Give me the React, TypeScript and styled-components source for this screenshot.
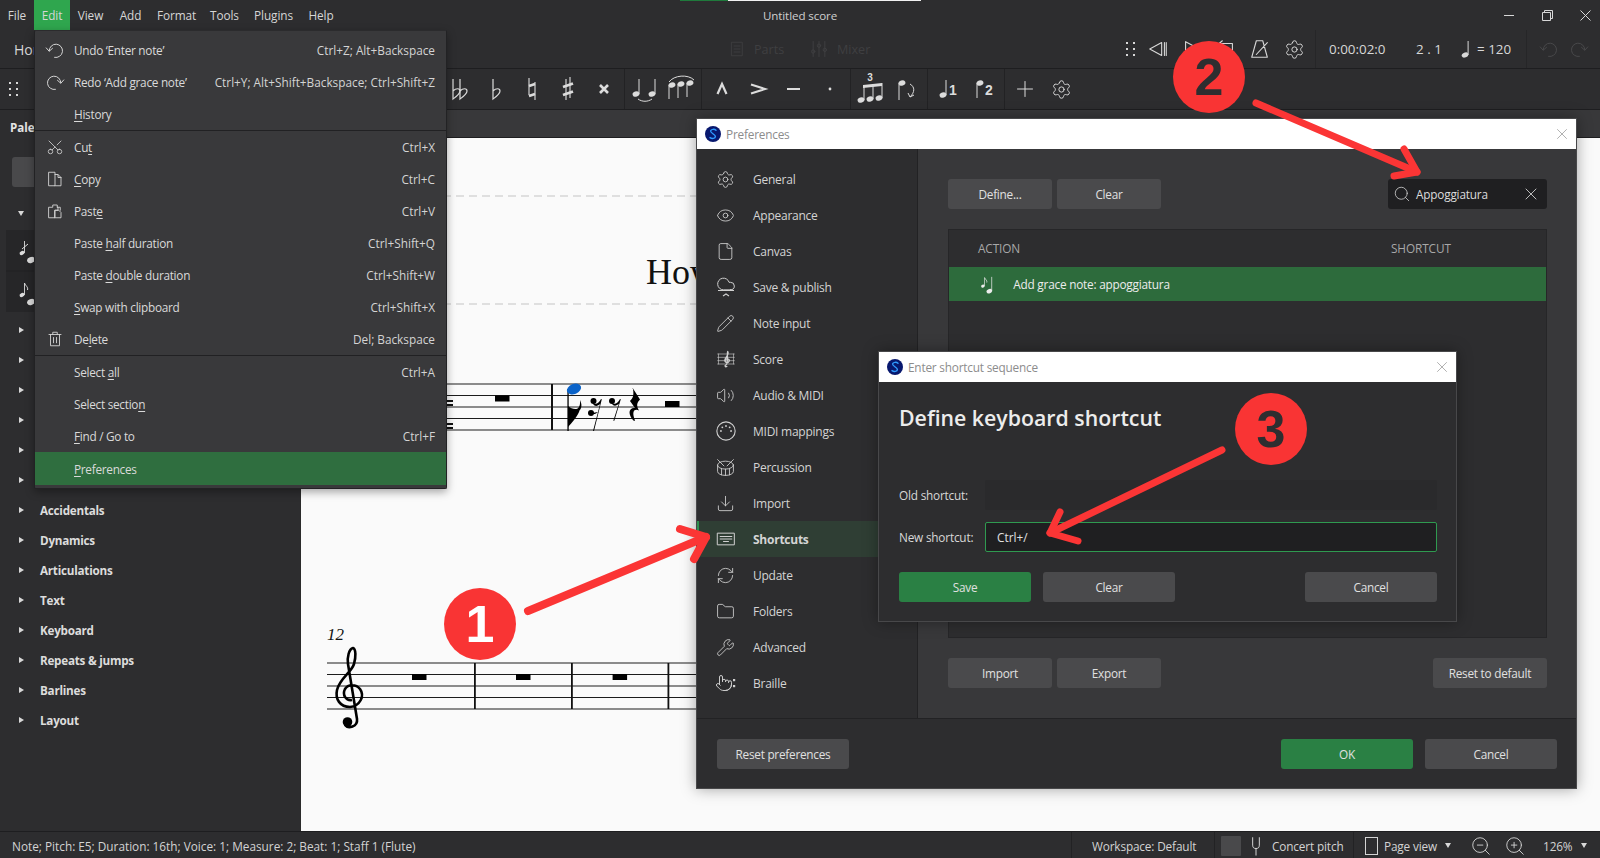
import React from "react";
import styled, { createGlobalStyle } from "styled-components";
import { Settings, Eye, File, Cloud, Pencil, Volume2, Drum, Download, RefreshCw, Folder, Wrench, Pointer, Scissors, Search, X, ZoomIn, ZoomOut } from "lucide-react";

const Global = createGlobalStyle`
  html, body { margin: 0; padding: 0; background: #2d2d2f; }
  body { font-family: "Open Sans", "Noto Sans", "Liberation Sans", sans-serif; font-size: 11.6px; color: #d8d8d8; overflow: hidden; }
  * { box-sizing: border-box; }
  #root { width: 1600px; height: 858px; }
`;

const Page = styled.div`
  position: relative; width: 1600px; height: 858px; display: flex; flex-direction: column; background: #2d2d2f; overflow: hidden;
`;

/* ---------- top bars ---------- */
const TitleBar = styled.div`
  height: 30px; display: grid; grid-template-columns: 1fr auto 1fr; align-items: stretch; flex: none;
`;
const MenuItems = styled.div` display: flex; `;
const MenuItem = styled.div<{ $w: number; $active?: boolean }>`
  width: ${(p) => p.$w}px; display: flex; align-items: center; justify-content: center; color: #d6d6d6; font-size: 11.8px; letter-spacing: -0.1px;
  background: ${(p) => (p.$active ? "#2fa64e" : "transparent")};
`;
const WindowTitle = styled.div` display: flex; align-items: center; font-size: 11.6px; letter-spacing: -0.1px; color: #cfcfcf; `;
const WindowControls = styled.div` display: flex; justify-content: flex-end; gap: 8px; `;
const WindowButton = styled.div` width: 30px; display: flex; align-items: center; justify-content: center; color: #d8d8d8; `;
const Progress = styled.div`
  position: absolute; left: 680px; top: 0; width: 241px; height: 1px; background: linear-gradient(90deg, #1f7a3c 0 48px, #f2f2f2 48px);
`;

const HomeBar = styled.div`
  height: 39px; flex: none; display: flex; align-items: center; border-bottom: 1px solid #1e1e20;
`;
const HomeTab = styled.div` width: 728px; padding-left: 14px; font-size: 14px; color: #d8d8d8; `;
const FaintItem = styled.div<{ $w: number }>`
  width: ${(p) => p.$w}px; display: flex; align-items: center; gap: 8px; color: #3f3f41; font-size: 12.6px;
`;
const Transport = styled.div` margin-left: auto; display: flex; align-items: center; height: 100%; `;
const TButton = styled.div<{ $w?: number; $faint?: boolean }>`
  width: ${(p) => p.$w ?? 34}px; height: 100%; display: flex; align-items: center; justify-content: center; color: ${(p) => (p.$faint ? "#48484a" : "#d8d8d8")};
`;
const TDivider = styled.div` width: 1px; height: 100%; background: #262628; margin-left: 4px; `;
const Counter = styled.div<{ $w: number; $ml: number }>`
  width: ${(p) => p.$w}px; margin-left: ${(p) => p.$ml}px; font-size: 13.4px; color: #d8d8d8; display: flex; align-items: center; gap: 5px; white-space: nowrap;
`;
const EndDivider = styled.div` width: 1px; height: 100%; background: #262628; margin-left: 11px; margin-right: 7px; `;

const NoteBar = styled.div`
  height: 41px; flex: none; display: flex; align-items: stretch; border-bottom: 1px solid #1e1e20;
`;
const GripCell = styled.div` width: 28px; display: flex; align-items: center; justify-content: center; color: #d8d8d8; margin-right: 412px; `;
const NoteGroup = styled.div<{ $last?: boolean }>`
  display: flex; padding: 0 2px; align-items: center; border-right: ${(p) => (p.$last ? "none" : "1px solid #222224")};
`;
const NoteButton = styled.div` width: 36px; height: 100%; display: flex; align-items: center; justify-content: center; color: #dcdcdc; `;

/* ---------- body ---------- */
const Body = styled.div` flex: 1; display: flex; min-height: 0; `;
const Palette = styled.div` width: 300px; flex: none; display: flex; flex-direction: column; background: #2d2d2f; `;
const PaletteTab = styled.div` height: 27px; padding: 10px 0 0 10px; font-weight: 700; font-size: 11.6px; color: #e4e4e4; line-height: 16px; `;
const PaletteSearch = styled.div` margin: 20px 14px 11px 12px; height: 30px; background: #49494b; border-radius: 3px; flex: none; `;
const PaletteRow = styled.div`
  height: 30px; flex: none; display: flex; align-items: center; gap: 16px; padding-left: 19px; font-weight: 700; font-size: 11.7px; letter-spacing: -0.25px; color: #dcdcdc;
`;
const Caret = styled.span<{ $open?: boolean }>`
  display: inline-block; width: 0; height: 0; flex: none;
  ${(p) =>
    p.$open
      ? "border-left: 3px solid transparent; border-right: 3px solid transparent; border-top: 5px solid #d8d8d8; margin-left: -1px; margin-right: -1px;"
      : "border-top: 3px solid transparent; border-bottom: 3px solid transparent; border-left: 5px solid #d8d8d8;"}
`;
const PaletteCells = styled.div` margin: 2px 10px 3px 6px; height: 82px; background: #232325; display: flex; flex-direction: column; gap: 2px; flex: none; `;
const PaletteCell = styled.div` flex: 1; padding-left: 12px; display: flex; align-items: center; color: #dcdcdc; background: #262628; `;

const MainColumn = styled.div` flex: 1; display: flex; flex-direction: column; min-width: 0; `;
const TabStrip = styled.div` height: 28px; flex: none; background: #38383a; border-bottom: 1px solid #1e1e20; `;
const Score = styled.div` position: relative; flex: 1; background: #fafafa; border-left: 1px solid #2b2b2b; overflow: hidden; `;
const ScoreCanvas = styled.svg` position: absolute; left: -1px; top: 0; width: 1300px; height: 694px; `;

/* ---------- status bar ---------- */
const StatusBar = styled.div`
  height: 27px; flex: none; display: flex; align-items: center; border-top: 1px solid #1e1e20; background: #2d2d2f; font-size: 11.8px; letter-spacing: -0.15px; color: #d4d4d4;
`;
const StatusText = styled.div` padding: 1px 0 0 12px; flex: 1; white-space: nowrap; letter-spacing: 0; `;
const StatusSection = styled.div<{ $w: number; $pad?: number; $gap?: number }>`
  width: ${(p) => p.$w}px; height: 100%; display: flex; align-items: center; border-left: 1px solid #222224; padding: 1px 0 0 ${(p) => p.$pad ?? 20}px; gap: ${(p) => p.$gap ?? 8}px; white-space: nowrap;
`;
const ToggleBox = styled.div` width: 20px; height: 20px; background: #49494b; margin-left: -14px; border-radius: 1px; margin-right: -3px; `;
const ConcertLabel = styled.span` margin-left: -2px; `;
const DownCaret = styled.span<{ $ml: number }>`
  display: inline-block; width: 0; height: 0; margin-left: ${(p) => p.$ml}px; border-left: 3px solid transparent; border-right: 3px solid transparent; border-top: 5px solid #d8d8d8;
`;
const ZoomSlot = styled.span<{ $ml: number }>` display: flex; margin-left: ${(p) => p.$ml}px; `;
const ZoomValue = styled.span` margin-left: 11px; `;

/* ---------- edit menu ---------- */
const EditMenu = styled.div`
  position: absolute; left: 34px; top: 30px; width: 413px; background: #39393b; border: 1px solid #222224; border-top-color: #2b2b2d; padding: 3px 0;
  border-radius: 2px; box-shadow: 0 3px 8px rgba(0, 0, 0, 0.35); z-index: 3; font-size: 11.8px; color: #dadada;
`;
const MenuRow = styled.div<{ $hot?: boolean }>`
  height: ${(p) => (p.$hot ? 33 : 32)}px; display: flex; align-items: center; background: ${(p) => (p.$hot ? "#2f6e3f" : "transparent")}; padding-right: 11px; white-space: nowrap;
  u { text-underline-offset: 2px; text-decoration-thickness: 1px; }
`;
const MenuIcon = styled.span` width: 39px; display: flex; justify-content: center; color: #d4d4d4; `;
const MenuLabel = styled.span` flex: 1; letter-spacing: -0.28px; `;
const MenuKeys = styled.span` color: #d4d4d4; `;
const MenuRule = styled.div` height: 1px; background: #212123; `;

/* ---------- dialogs ---------- */
const Dialog = styled.div<{ $x: number; $y: number; $w: number; $h: number; $z: number }>`
  position: absolute; left: ${(p) => p.$x}px; top: ${(p) => p.$y}px; width: ${(p) => p.$w}px; height: ${(p) => p.$h}px; z-index: ${(p) => p.$z};
  display: flex; flex-direction: column; background: #2d2d2f; box-shadow: 0 0 14px rgba(0, 0, 0, 0.35); outline: 1px solid #48484a; outline-offset: -1px;
`;
const DialogTitle = styled.div`
  height: 31px; flex: none; background: #fff; display: flex; align-items: center; padding: 0 6px 0 9px; gap: 5px; color: #8c8c8c; font-size: 11.8px; letter-spacing: -0.2px;
`;
const DialogClose = styled.span` margin-left: auto; color: #8a8a8a; display: flex; `;

const PrefBody = styled.div` flex: 1; display: flex; min-height: 0; `;
const PrefNav = styled.div` width: 222px; flex: none; padding-top: 12px; border-right: 1px solid #222224; `;
const NavRow = styled.div<{ $on?: boolean }>`
  height: 36px; display: flex; align-items: center; color: #d4d4d4; font-size: 12px; letter-spacing: -0.25px;
  font-weight: ${(p) => (p.$on ? 700 : 400)};
  background: ${(p) => (p.$on ? "#2f3e34" : "transparent")};
  border-left: 3px solid ${(p) => (p.$on ? "#2f8f4f" : "transparent")};
`;
const NavIcon = styled.span` width: 53px; display: flex; justify-content: center; color: #d0d0d0; `;
const NavLabel = styled.span` padding-left: 1px; `;
const PrefMain = styled.div` flex: 1; background: #38383a; padding: 30px; display: flex; flex-direction: column; gap: 20px; min-width: 0; `;
const RowBar = styled.div` display: flex; align-items: center; gap: 5px; flex: none; `;
const Push = styled.div` margin-left: auto; `;
const Btn = styled.div<{ $w: number; $primary?: boolean }>`
  width: ${(p) => p.$w}px; height: 30px; border-radius: 3px; display: flex; align-items: center; justify-content: center; flex: none;
  background: ${(p) => (p.$primary ? "#2a8044" : "#4a4a4c")}; color: #e0e0e0; font-size: 11.8px; letter-spacing: -0.25px;
`;
const SearchBox = styled.div`
  width: 159px; height: 30px; background: #1f1f21; border-radius: 3px; display: flex; align-items: center; padding: 0 6px 0 5px; gap: 5px; color: #dcdcdc; font-size: 11.8px; letter-spacing: -0.2px;
`;
const SearchValue = styled.span` flex: 1; `;
const Table = styled.div` flex: 1; background: #2d2d2f; border: 1px solid #262628; display: flex; flex-direction: column; min-height: 0; `;
const TableHead = styled.div` height: 37px; flex: none; display: flex; align-items: center; padding: 0 0 1px 29px; color: #a8a8a8; font-size: 11.8px; letter-spacing: -0.1px; `;
const HeadShortcut = styled.span` margin-left: auto; width: 155px; `;
const TableRow = styled.div` height: 34px; flex: none; display: flex; align-items: center; padding-left: 31px; background: #2d6b3c; color: #ececec; font-size: 11.8px; letter-spacing: -0.22px; gap: 19px; `;
const PrefFooter = styled.div` height: 71px; flex: none; border-top: 1px solid #222224; display: flex; align-items: center; padding: 0 20px 0 21px; gap: 12px; `;

const DefineBody = styled.div` flex: 1; display: flex; flex-direction: column; padding: 20px 20px 20px 21px; min-height: 0; `;
const DefineHeading = styled.div` font-size: 21.3px; font-weight: 600; line-height: 32px; color: #ececec; height: 78px; `;
const FieldRow = styled.div` display: flex; align-items: center; height: 30px; margin-bottom: 12px; font-size: 11.8px; color: #d8d8d8; `;
const FieldLabel = styled.span` width: 86px; flex: none; letter-spacing: -0.2px; `;
const Field = styled.div<{ $focus?: boolean }>`
  flex: 1; height: 30px; border-radius: 2px; display: flex; align-items: center; padding-left: 11px; color: #e0e0e0;
  background: ${(p) => (p.$focus ? "#1f1f21" : "#2a2a2c")}; border: 1px solid ${(p) => (p.$focus ? "#2f9a50" : "transparent")};
`;
const DefineButtons = styled.div` display: flex; gap: 12px; margin-top: 8px; `;

/* ---------- annotations ---------- */
const Overlay = styled.svg` position: absolute; left: 0; top: 0; width: 1600px; height: 858px; z-index: 8; pointer-events: none; `;
const Badge = styled.div<{ $x: number; $y: number; $light?: boolean }>`
  position: absolute; left: ${(p) => p.$x - 36}px; top: ${(p) => p.$y - 36}px; width: 72px; height: 72px; border-radius: 50%; z-index: 9; background: #f93434;
  display: flex; align-items: center; justify-content: center; font-family: "Liberation Sans", Arial, sans-serif; font-weight: 700; font-size: 52px;
  color: ${(p) => (p.$light ? "#ffffff" : "#2e2e30")};
`;

/* ---------- icons ---------- */
const Dots = () => (
  <svg width="12" height="16" viewBox="0 0 12 16" fill="currentColor">
    {[1, 7, 13].map((y) => [1, 8].map((x) => <rect key={`${x}${y}`} x={x} y={y} width="2" height="2" />))}
  </svg>
);
const Logo = () => (
  <svg width="16" height="16" viewBox="0 0 16 16">
    <circle cx="8" cy="8" r="8" fill="#08186e" />
    <path d="M11 4.2C9.5 2.8 6 3 5.6 5c-.4 2 4.8 3.4 4.8 5.6 0 2-3.5 2.4-5.4 1" fill="none" stroke="#2f9bff" strokeWidth="1.4" strokeLinecap="round" />
  </svg>
);
const S = ({ size = 18, children }: { size?: number; children: React.ReactNode }) => (
  <svg width={size} height={size} viewBox="0 0 24 24" fill="none" stroke="currentColor" strokeWidth="1.2" strokeLinecap="round" strokeLinejoin="round">
    {children}
  </svg>
);
const thin = { size: 19, strokeWidth: 1.1 };

const UndoIcon = () => (
  <S size={20}>
    <path d="M5 13a8 8 0 1 1 6.5 7.9" />
    <path d="M1.5 9.5 5 13.5l4-3.5" />
  </S>
);
const RedoIcon = () => (
  <S size={20}>
    <path d="M19 13a8 8 0 1 0-6.5 7.9" />
    <path d="M22.5 9.5 19 13.5l-4-3.5" />
  </S>
);
const CopyIcon = () => (
  <S>
    <path d="M4 3h8v18H4zM12 6h4l4 4v11h-8" />
    <path d="M16 6v4h4" />
  </S>
);
const PasteIcon = () => (
  <S>
    <path d="M4 7h5V4h6v3h1v4h-4v10H4z" />
    <path d="M12 11h5l3 3v7h-8zM15 7h4v4" />
  </S>
);
const TrashIcon = () => (
  <S>
    <path d="M4 6h16M9 6V3h6v3M6 6v15h12V6M10 10v7M14 10v7" />
  </S>
);
const ScoreNavIcon = () => (
  <S size={20}>
    <path d="M2 6h20M2 10h20M2 14h20M2 18h20M3 6v12M21 6v12" strokeOpacity=".6" />
    <path d="M13 21c-2 1-3-1-1-2 3-1 1-14 2-16 2 2-1 6-3 9-2 4 4 6 5 2 0-3-5-3-5 0" strokeWidth="1.6" />
  </S>
);
const MidiIcon = () => (
  <S size={22}>
    <circle cx="12" cy="12" r="10" />
    <g fill="currentColor" stroke="none">
      <circle cx="6.5" cy="12" r="1" /><circle cx="8" cy="8" r="1" /><circle cx="12" cy="6.5" r="1" /><circle cx="16" cy="8" r="1" /><circle cx="17.5" cy="12" r="1" />
    </g>
  </S>
);
const KeyboardIcon = () => (
  <S size={20}>
    <path d="M2 5h20v14H2zM5 9h14M5 12h14M9 15h6" />
  </S>
);
const CloudIcon = () => (
  <svg width="20" height="22" viewBox="0 0 20 22" fill="none" stroke="currentColor" strokeWidth="1.1">
    <Cloud x={0} y={-2} width={20} height={20} strokeWidth={1.2} />
    <path d="M7 20l3-2 3 2M2 14.5h16" />
  </svg>
);
const BrailleIcon = () => (
  <svg width="22" height="20" viewBox="0 0 22 20" fill="currentColor">
    <Pointer x={0} y={0} width={18} height={20} strokeWidth={1.3} fill="none" />
    <rect x="18" y="6" width="2.2" height="2.2" /><rect x="18" y="12" width="2.2" height="2.2" />
  </svg>
);
const PrevIcon = () => (
  <S size={22}>
    <path d="M16 5 3 12l13 7zM19 5v14M21 5v14" />
  </S>
);
const PlayIcon = () => (
  <S size={22}>
    <path d="M5 4l15 8-15 8z" />
  </S>
);
const LoopIcon = () => (
  <S size={22}>
    <path d="M4 6h15v13H5V9M8 3 4.5 6 8 9" />
  </S>
);
const MetronomeIcon = () => (
  <S size={22}>
    <path d="M8 3h7l5 18H3zM8 18 20 5" />
  </S>
);
const SmallNote = () => (
  <svg width="11" height="18" viewBox="0 0 11 18" fill="currentColor">
    <ellipse cx="4" cy="15" rx="3.4" ry="2.5" transform="rotate(-22 4 15)" />
    <rect x="6.6" y="1" width="1" height="14" />
  </svg>
);

const M = ({ w = 26, children }: { w?: number; children: React.ReactNode }) => (
  <svg width={w} height="30" viewBox={`0 0 ${w} 30`} fill="currentColor" stroke="currentColor" strokeWidth="0">
    {children}
  </svg>
);
const flatPath = (x: number) => `M${x} 5v20c4-3 7-5 7-8 0-3-4-3-7 0`;
const Note = ({ x, y, up = true, h = 14 }: { x: number; y: number; up?: boolean; h?: number }) => (
  <g>
    <ellipse cx={x} cy={y} rx="3.5" ry="2.6" transform={`rotate(-22 ${x} ${y})`} />
    {up ? <rect x={x + 2.5} y={y - h} width="1" height={h} /> : <rect x={x - 3.5} y={y} width="1" height={h} />}
  </g>
);
const DoubleFlat = () => (
  <M><g fill="none" stroke="currentColor" strokeWidth="1.2"><path d={flatPath(6)} /><path d={flatPath(13)} /></g></M>
);
const Flat = () => (
  <M><g fill="none" stroke="currentColor" strokeWidth="1.2"><path d={flatPath(10)} /></g></M>
);
const Natural = () => (
  <M><g fill="none" stroke="currentColor"><path d="M10 4v17M16 8v18" strokeWidth="1.1" /><path d="M10 12l6-2M10 22l6-2" strokeWidth="2.6" /></g></M>
);
const Sharp = () => (
  <M><g fill="none" stroke="currentColor"><path d="M11 5v21M15 3v21" strokeWidth="1.1" /><path d="M8 13l10-3.500M8 21l10-3.500" strokeWidth="2.8" /></g></M>
);
const DoubleSharp = () => (
  <M><path d="M9 11l8 8M17 11l-8 8" stroke="currentColor" strokeWidth="2.6" fill="none" /></M>
);
const Tie = () => (
  <M w={30}><Note x={6} y={20} h={15} /><Note x={22} y={20} h={15} /><path d="M8 25c4 3 10 3 14 0" fill="none" stroke="currentColor" strokeWidth="1" /></M>
);
const Slur = () => (
  <M w={32}><Note x={7} y={11} up={false} /><Note x={16} y={10} up={false} /><Note x={25} y={9} up={false} /><path d="M4 8C9 1 23 0 29 6" fill="none" stroke="currentColor" strokeWidth="1" /></M>
);
const Marcato = () => (
  <M><path d="M8.500 20 13 10l4.500 10" fill="none" stroke="currentColor" strokeWidth="2.2" /></M>
);
const Accent = () => (
  <M><path d="M6 10.500l14 4.500-14 4.500" fill="none" stroke="currentColor" strokeWidth="2.2" /></M>
);
const Tenuto = () => (
  <M><rect x="6" y="14" width="13" height="2" /></M>
);
const Staccato = () => (
  <M><circle cx="13" cy="15" r="1.4" /></M>
);
const Tuplet = () => (
  <svg width="30" height="34" viewBox="0 0 30 34" fill="currentColor">
    <Note x={5} y={28} h={15} /><Note x={14} y={27} h={15} /><Note x={23} y={26} h={15} />
    <path d="M7 13l19-2v3l-19 2z" />
    <text x="14" y="9" fontSize="10" fontWeight="700" textAnchor="middle" fontFamily="'Liberation Sans', sans-serif">3</text>
  </svg>
);
const Flip = () => (
  <M><Note x={8} y={9} up={false} h={17} /><path d="M16 10c5 3 5 8 0 13M14 19l2 4 4-2" fill="none" stroke="currentColor" strokeWidth="1" /></M>
);
const Voice = ({ n, up }: { n: string; up: boolean }) => (
  <M>
    {up ? <Note x={8} y={21} h={15} /> : <Note x={9} y={9} up={false} h={15} />}
    <text x="18" y="21" fontSize="14" fontWeight="700" textAnchor="middle" fontFamily="'Liberation Sans', sans-serif">{n}</text>
  </M>
);
const Plus = () => (
  <S size={20}><path d="M12 3v18M3 12h18" /></S>
);
const GraceGlyph = ({ slash, h = 28 }: { slash?: boolean; h?: number }) => (
  <svg width={(h * 20) / 28} height={h} viewBox="0 0 20 28" fill="currentColor" stroke="none">
    <ellipse cx="13" cy="24" rx="4" ry="3" transform="rotate(-22 13 24)" />
    <rect x="16" y="4" width="1" height="20" />
    <ellipse cx="4" cy="17" rx="2.5" ry="2" transform="rotate(-22 4 17)" />
    <rect x="6" y="5" width=".9" height="12" />
    {slash ? <path d="M4 13l6-5" stroke="currentColor" /> : <path d="M6.5 5c1 3 4 4 3 7" fill="none" stroke="currentColor" />}
  </svg>
);

const Staff = ({ x1, x2, y }: { x1: number; x2: number; y: number }) => (
  <g stroke="#1c1c1c" strokeWidth="1.1">
    {[0, 11.5, 23, 34.5, 46].map((d) => <line key={d} x1={x1} x2={x2} y1={y + d} y2={y + d} />)}
  </g>
);
const WholeRest = ({ x, y }: { x: number; y: number }) => <rect x={x} y={y} width="14.5" height="6" fill="#000" />;
const Bar = ({ x, y }: { x: number; y: number }) => <rect x={x} y={y} width="1.8" height="46" fill="#111" />;

const ScoreDrawing = () => (
  <ScoreCanvas viewBox="0 0 1300 694">
    <g transform="translate(-300,-137)">
      <g stroke="#c4c4c4" strokeWidth="1.2" strokeDasharray="8 5">
        <line x1="300" x2="1000" y1="195" y2="195" />
        <line x1="300" x2="1000" y1="303" y2="303" />
      </g>
      <text x="646" y="283" fontFamily="'Liberation Serif', serif" fontSize="36" fill="#111">How</text>
      <Staff x1={300} x2={700} y={383} />
      <rect x="446" y="399" width="7" height="2" fill="#111" /><rect x="446" y="403" width="7" height="2" fill="#111" />
      <rect x="446" y="422" width="7" height="2" fill="#111" /><rect x="446" y="426" width="7" height="2" fill="#111" />
      <rect x="551" y="383" width="2" height="46" fill="#111" />
      <WholeRest x={495} y={394.5} />
      <WholeRest x={665} y={400} />
      <rect x="567.4" y="388" width="1.3" height="42" fill="#000" />
      <path d="M568 405c5 4 13 6 12-6 3 6 1 10-3 13-3 2-6 4-9 7zM568 418c4-3 10-6 12-14 1 6-3 12-12 22z" fill="#000" />
      <ellipse cx="574" cy="388" rx="7.4" ry="5" transform="rotate(-22 574 388)" fill="#0a63c9" />
      <g fill="#000">
        <circle cx="593.5" cy="400" r="3" /><circle cx="591" cy="412" r="3" />
        <path d="M593 402c3 2 6 0 8-4l.8.3L594 430h-1l5-19c-2 2-5 3-6 1l6-1 2-8c-2 2-5 3-7 0z" />
        <circle cx="612" cy="400" r="3" />
        <path d="M612 402c3 2 6 0 8-4l.8.3-6.5 21.5h-1l5.500-17c-2 2-5 3-7 0z" />
        <path d="M632 388l1-.5 7 11c-3 3-4 6-1 11-4-2-8 0-4 10l-1 .5c-7-7-5-14 1-13l-5-7c3-3 4-6 3-12z" />
      </g>
      <Staff x1={327} x2={700} y={662} />
      <text x="327" y="639" fontFamily="'Liberation Serif', serif" fontStyle="italic" fontSize="17" fill="#111">12</text>
      <path d="M352 699C346 700 342 694 345 688C348 683 356 683 360 688C365 695 360 705 350 706C340 706 335 698 337 689C340 677 351 672 354 663C356 656 356 648 353 647C349 648 347 656 348 663L357 718C358 726 348 728 345 724" fill="none" stroke="#000" strokeWidth="2.6" />
      <circle cx="347.500" cy="721" r="4.8" fill="#000" />
      <WholeRest x={412} y={673} /><WholeRest x={516} y={673} /><WholeRest x={612.6} y={673} />
      <Bar x={474} y={662} /><Bar x={571} y={662} /><Bar x={667.500} y={662} />
      <rect x="300" y="137" width="1" height="694" fill="#2b2b2b" />
    </g>
  </ScoreCanvas>
);

const Arrow = ({ from, tip, a, b, w = 8 }: { from: number[]; tip: number[]; a: number[]; b: number[]; w?: number }) => (
  <g stroke="#fb3535" fill="none" strokeLinecap="round" strokeLinejoin="round">
    <line x1={from[0]} y1={from[1]} x2={tip[0]} y2={tip[1]} strokeWidth={w} />
    <path d={`M${a[0]} ${a[1]}L${tip[0]} ${tip[1]}L${b[0]} ${b[1]}`} strokeWidth={w} />
  </g>
);

/* ---------- data ---------- */
const menuBarItems = [
  ["File", 34], ["Edit", 36], ["View", 41], ["Add", 39], ["Format", 53], ["Tools", 43], ["Plugins", 55], ["Help", 40],
] as const;

const navItems: [string, React.ReactNode][] = [
  ["General", <Settings {...thin} />],
  ["Appearance", <Eye {...thin} />],
  ["Canvas", <File {...thin} />],
  ["Save & publish", <CloudIcon />],
  ["Note input", <Pencil {...thin} />],
  ["Score", <ScoreNavIcon />],
  ["Audio & MIDI", <Volume2 {...thin} />],
  ["MIDI mappings", <MidiIcon />],
  ["Percussion", <Drum {...thin} />],
  ["Import", <Download {...thin} />],
  ["Shortcuts", <KeyboardIcon />],
  ["Update", <RefreshCw {...thin} />],
  ["Folders", <Folder {...thin} />],
  ["Advanced", <Wrench {...thin} />],
  ["Braille", <BrailleIcon />],
];

const paletteNames = ["Accidentals", "Dynamics", "Articulations", "Text", "Keyboard", "Repeats & jumps", "Barlines", "Layout"];

const Row = ({ icon, label, keys, hot }: { icon?: React.ReactNode; label: React.ReactNode; keys?: string; hot?: boolean }) => (
  <MenuRow $hot={hot}>
    <MenuIcon>{icon}</MenuIcon>
    <MenuLabel>{label}</MenuLabel>
    {keys && <MenuKeys>{keys}</MenuKeys>}
  </MenuRow>
);

export default function App() {
  return (
    <Page>
      <Global />
      <Progress />
      <TitleBar>
        <MenuItems>
          {menuBarItems.map(([t, w]) => (
            <MenuItem key={t} $w={w} $active={t === "Edit"}>{t}</MenuItem>
          ))}
        </MenuItems>
        <WindowTitle>Untitled score</WindowTitle>
        <WindowControls>
          <WindowButton><svg width="11" height="11" viewBox="0 0 11 11" stroke="currentColor"><path d="M0 5.500h10" /></svg></WindowButton>
          <WindowButton><svg width="11" height="11" viewBox="0 0 11 11" fill="none" stroke="currentColor"><path d="M.5 2.500h8v8h-8zM2.500 2.500v-2h8v8h-2" /></svg></WindowButton>
          <WindowButton><svg width="11" height="11" viewBox="0 0 11 11" stroke="currentColor"><path d="M.5.500l10 10M10.500.500l-10 10" /></svg></WindowButton>
        </WindowControls>
      </TitleBar>

      <HomeBar>
        <HomeTab>Home</HomeTab>
        <FaintItem $w={81}>
          <S size={18}><path d="M5 3h14v18H5zM8 8h8M8 12h8M8 16h8" /></S>
          Parts
        </FaintItem>
        <FaintItem $w={70}>
          <S size={20}><path d="M5 3v18M12 3v18M19 3v18" /><circle cx="5" cy="15" r="2" /><circle cx="12" cy="8" r="2" /><circle cx="19" cy="13" r="2" /></S>
          Mixer
        </FaintItem>
        <Transport>
          <TButton $w={21}><Dots /></TButton>
          <TButton><PrevIcon /></TButton>
          <TButton><PlayIcon /></TButton>
          <TButton><LoopIcon /></TButton>
          <TButton><MetronomeIcon /></TButton>
          <TButton><Settings size={21} strokeWidth={1.1} /></TButton>
          <TDivider />
          <Counter $w={57} $ml={13}>0:00:02:0</Counter>
          <Counter $w={24} $ml={30}>2 . 1</Counter>
          <Counter $w={54} $ml={21}><SmallNote /> = 120</Counter>
          <EndDivider />
          <TButton $w={30} $faint><UndoIcon /></TButton>
          <TButton $w={30} $faint><RedoIcon /></TButton>
          <TButton $w={6} />
        </Transport>
      </HomeBar>

      <NoteBar>
        <GripCell><Dots /></GripCell>
        <NoteGroup>
          <NoteButton><DoubleFlat /></NoteButton>
          <NoteButton><Flat /></NoteButton>
          <NoteButton><Natural /></NoteButton>
          <NoteButton><Sharp /></NoteButton>
          <NoteButton><DoubleSharp /></NoteButton>
        </NoteGroup>
        <NoteGroup>
          <NoteButton><Tie /></NoteButton>
          <NoteButton><Slur /></NoteButton>
        </NoteGroup>
        <NoteGroup>
          <NoteButton><Marcato /></NoteButton>
          <NoteButton><Accent /></NoteButton>
          <NoteButton><Tenuto /></NoteButton>
          <NoteButton><Staccato /></NoteButton>
        </NoteGroup>
        <NoteGroup>
          <NoteButton><Tuplet /></NoteButton>
          <NoteButton><Flip /></NoteButton>
        </NoteGroup>
        <NoteGroup>
          <NoteButton><Voice n="1" up /></NoteButton>
          <NoteButton><Voice n="2" up={false} /></NoteButton>
        </NoteGroup>
        <NoteGroup $last>
          <NoteButton><Plus /></NoteButton>
          <NoteButton><Settings size={21} strokeWidth={1.1} /></NoteButton>
        </NoteGroup>
      </NoteBar>

      <Body>
        <Palette>
          <PaletteTab>Palettes</PaletteTab>
          <PaletteSearch />
          <PaletteRow><Caret $open /></PaletteRow>
          <PaletteCells>
            <PaletteCell><GraceGlyph slash /></PaletteCell>
            <PaletteCell><GraceGlyph /></PaletteCell>
          </PaletteCells>
          {[0, 1, 2, 3, 4, 5].map((i) => <PaletteRow key={i}><Caret /></PaletteRow>)}
          {paletteNames.map((n) => <PaletteRow key={n}><Caret />{n}</PaletteRow>)}
        </Palette>
        <MainColumn>
          <TabStrip />
          <Score><ScoreDrawing /></Score>
        </MainColumn>
      </Body>

      <StatusBar>
        <StatusText>Note; Pitch: E5; Duration: 16th; Voice: 1; Measure: 2; Beat: 1; Staff 1 (Flute)</StatusText>
        <StatusSection $w={143}>Workspace: Default</StatusSection>
        <StatusSection $w={139}>
          <ToggleBox />
          <S size={20}><path d="M8 2v9c0 3 1.500 4 4 4s4-1 4-4V2M12 15v8" /></S>
          <ConcertLabel>Concert pitch</ConcertLabel>
        </StatusSection>
        <StatusSection $w={247} $pad={11} $gap={6}>
          <svg width="13" height="18" viewBox="0 0 13 18" fill="none" stroke="currentColor"><rect x=".5" y=".5" width="12" height="17" /></svg>
          Page view
          <DownCaret $ml={2} />
          <ZoomSlot $ml={13}><ZoomOut size={22} strokeWidth={1} /></ZoomSlot>
          <ZoomSlot $ml={6}><ZoomIn size={22} strokeWidth={1} /></ZoomSlot>
          <ZoomValue>126%</ZoomValue>
          <DownCaret $ml={3} />
        </StatusSection>
      </StatusBar>

      <EditMenu>
        <Row icon={<UndoIcon />} label="Undo ‘Enter note’" keys="Ctrl+Z; Alt+Backspace" />
        <Row icon={<RedoIcon />} label="Redo ‘Add grace note’" keys="Ctrl+Y; Alt+Shift+Backspace; Ctrl+Shift+Z" />
        <Row label={<><u>H</u>istory</>} />
        <MenuRule />
        <Row icon={<Scissors size={18} strokeWidth={1.1} style={{ transform: "rotate(-90deg)" }} />} label={<>Cu<u>t</u></>} keys="Ctrl+X" />
        <Row icon={<CopyIcon />} label={<><u>C</u>opy</>} keys="Ctrl+C" />
        <Row icon={<PasteIcon />} label={<>Past<u>e</u></>} keys="Ctrl+V" />
        <Row label={<>Paste <u>h</u>alf duration</>} keys="Ctrl+Shift+Q" />
        <Row label={<>Paste <u>d</u>ouble duration</>} keys="Ctrl+Shift+W" />
        <Row label={<><u>S</u>wap with clipboard</>} keys="Ctrl+Shift+X" />
        <Row icon={<TrashIcon />} label={<>De<u>l</u>ete</>} keys="Del; Backspace" />
        <MenuRule />
        <Row label={<>Select <u>a</u>ll</>} keys="Ctrl+A" />
        <Row label={<>Select sectio<u>n</u></>} />
        <Row label={<><u>F</u>ind / Go to</>} keys="Ctrl+F" />
        <Row hot label={<><u>P</u>references</>} />
      </EditMenu>

      <Dialog $x={696} $y={118} $w={881} $h={671} $z={4}>
        <DialogTitle>
          <Logo />Preferences
          <DialogClose><X size={18} strokeWidth={0.9} /></DialogClose>
        </DialogTitle>
        <PrefBody>
          <PrefNav>
            {navItems.map(([n, ic]) => (
              <NavRow key={n} $on={n === "Shortcuts"}>
                <NavIcon>{ic}</NavIcon>
                <NavLabel>{n}</NavLabel>
              </NavRow>
            ))}
          </PrefNav>
          <PrefMain>
            <RowBar>
              <Btn $w={104}>Define...</Btn>
              <Btn $w={104}>Clear</Btn>
              <Push />
              <SearchBox>
                <Search size={18} strokeWidth={1} />
                <SearchValue>Appoggiatura</SearchValue>
                <X size={20} strokeWidth={1} />
              </SearchBox>
            </RowBar>
            <Table>
              <TableHead>ACTION<HeadShortcut>SHORTCUT</HeadShortcut></TableHead>
              <TableRow><GraceGlyph h={20} />Add grace note: appoggiatura</TableRow>
            </Table>
            <RowBar>
              <Btn $w={104}>Import</Btn>
              <Btn $w={104}>Export</Btn>
              <Push />
              <Btn $w={114}>Reset to default</Btn>
            </RowBar>
          </PrefMain>
        </PrefBody>
        <PrefFooter>
          <Btn $w={132}>Reset preferences</Btn>
          <Push />
          <Btn $w={132} $primary>OK</Btn>
          <Btn $w={132}>Cancel</Btn>
        </PrefFooter>
      </Dialog>

      <Dialog $x={878} $y={351} $w={579} $h={271} $z={5}>
        <DialogTitle>
          <Logo />Enter shortcut sequence
          <DialogClose><X size={18} strokeWidth={0.9} /></DialogClose>
        </DialogTitle>
        <DefineBody>
          <DefineHeading>Define keyboard shortcut</DefineHeading>
          <FieldRow><FieldLabel>Old shortcut:</FieldLabel><Field /></FieldRow>
          <FieldRow><FieldLabel>New shortcut:</FieldLabel><Field $focus>Ctrl+/</Field></FieldRow>
          <DefineButtons>
            <Btn $w={132} $primary>Save</Btn>
            <Btn $w={132}>Clear</Btn>
            <Push />
            <Btn $w={132}>Cancel</Btn>
          </DefineButtons>
        </DefineBody>
      </Dialog>

      <Overlay viewBox="0 0 1600 858">
        <Arrow from={[528, 611]} tip={[706, 537]} a={[680, 529]} b={[694, 559]} w={8} />
        <Arrow from={[1256, 103]} tip={[1417, 172]} a={[1404, 149]} b={[1394, 176]} w={7} />
        <Arrow from={[1222, 450]} tip={[1050, 533]} a={[1060, 512]} b={[1078, 541]} w={7} />
      </Overlay>
      <Badge $x={480} $y={624} $light>1</Badge>
      <Badge $x={1209} $y={77}>2</Badge>
      <Badge $x={1271} $y={429}>3</Badge>
    </Page>
  );
}
